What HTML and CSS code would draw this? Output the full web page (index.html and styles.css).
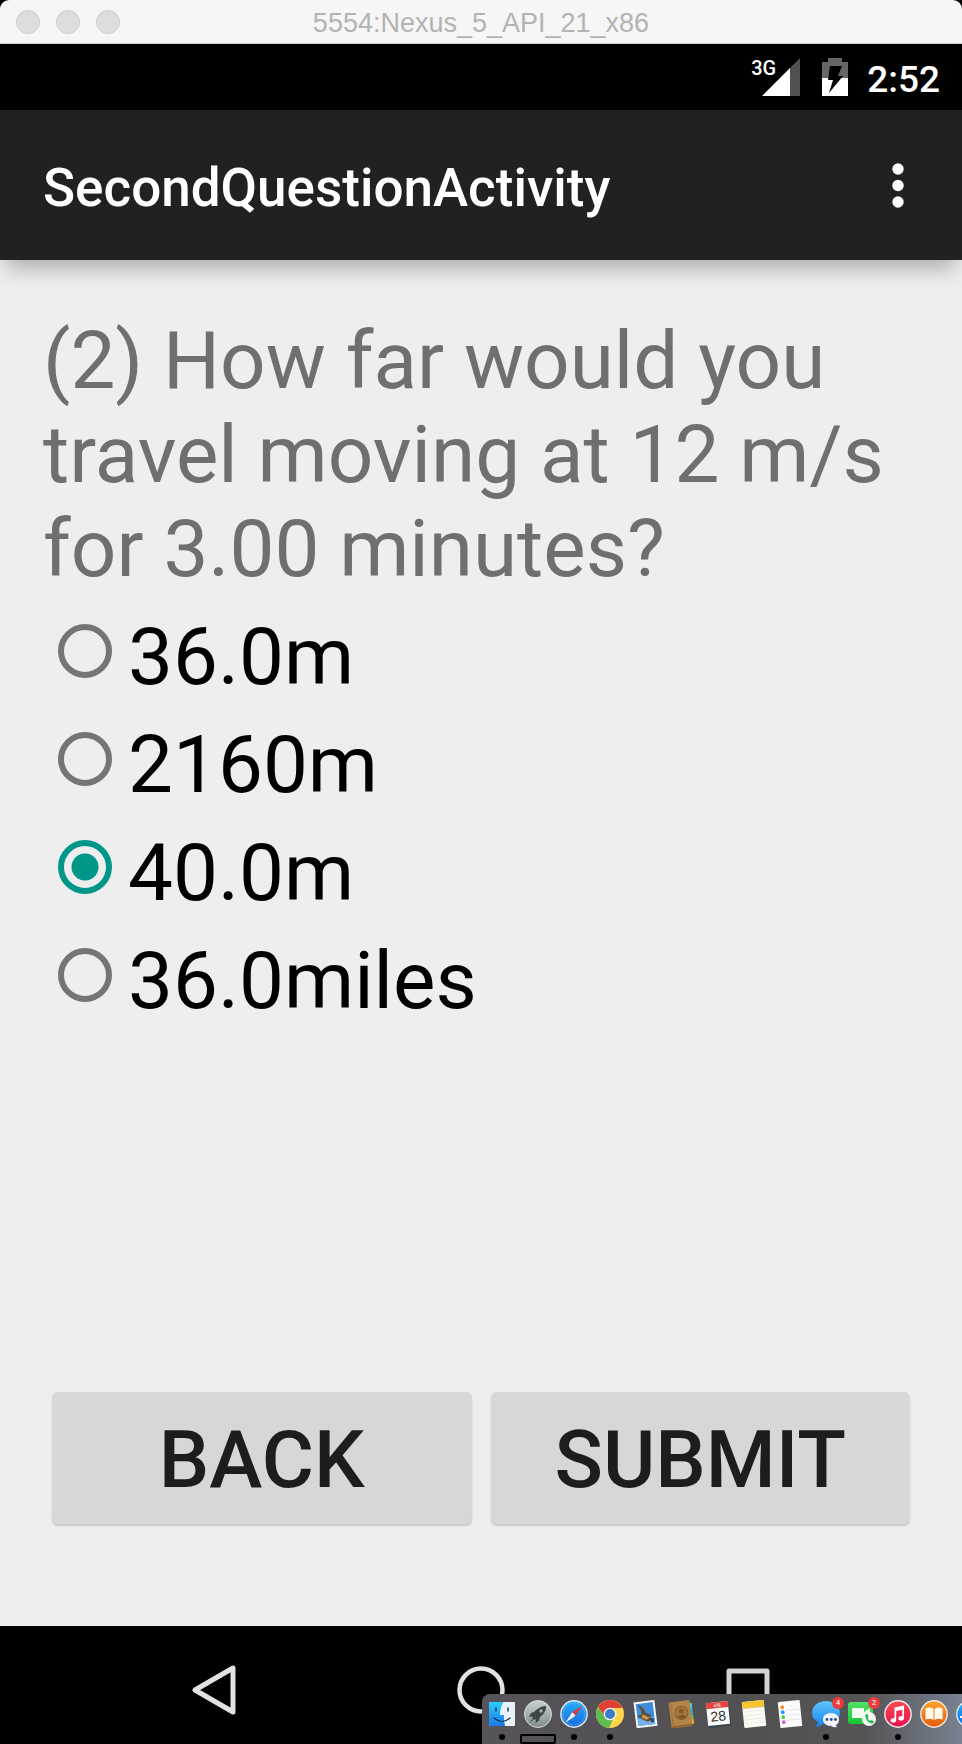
FILE: index.html
```html
<!DOCTYPE html>
<html lang="en">
<head>
<meta charset="utf-8">
<meta name="viewport" content="width=device-width, initial-scale=1">
<title>5554:Nexus_5_API_21_x86</title>
<link rel="stylesheet" href="styles.css">
</head>
<body>
<div class="window">
  <header class="titlebar">
    <div class="lights">
      <button class="light" type="button" aria-label="Close"></button>
      <button class="light" type="button" aria-label="Minimize"></button>
      <button class="light" type="button" aria-label="Zoom"></button>
    </div>
    <span class="window-title">5554:Nexus_5_API_21_x86</span>
  </header>

  <div class="statusbar">
    <span class="network">3G</span>
    <svg class="signal" width="38" height="38" viewBox="0 0 38 38" aria-hidden="true">
      <path fill="#505050" d="M38 0V38H27V11z"/>
      <path fill="#fff" d="M0 38L28 10V38z"/>
    </svg>
    <svg class="battery" width="26" height="38" viewBox="0 0 26 38" aria-hidden="true">
      <path fill="#666" d="M6 0H20V4H26V20H0V4H6z"/>
      <path fill="#fff" d="M0 20H26V38H0z"/>
      <path fill="#000" d="M8 8H20L16 18H21L7 35L11 22H6z"/>
    </svg>
    <time class="clock">2:52</time>
  </div>

  <div class="appbar">
    <h1 class="app-title">SecondQuestionActivity</h1>
    <button class="overflow" type="button" aria-label="More options">
      <svg width="12" height="46" viewBox="0 0 12 46" aria-hidden="true">
        <g fill="#fff"><circle cx="6" cy="6" r="5.7"/><circle cx="6" cy="22.500" r="5.700"/><circle cx="6" cy="39" r="5.700"/></g>
      </svg>
    </button>
  </div>

  <main class="content">
    <form class="quiz">
      <fieldset class="answers">
        <legend class="question">(2) How far would you travel moving at 12 m/s for 3.00 minutes?</legend>
        <label class="option"><input class="radio" type="radio" name="answer">36.0m</label>
        <label class="option"><input class="radio" type="radio" name="answer">2160m</label>
        <label class="option"><input class="radio" type="radio" name="answer" checked>40.0m</label>
        <label class="option"><input class="radio" type="radio" name="answer">36.0miles</label>
      </fieldset>
      <div class="actions">
        <button class="action" type="button">BACK</button>
        <button class="action" type="button">SUBMIT</button>
      </div>
    </form>
  </main>

  <nav class="navbar">
    <button class="nav-button" type="button" aria-label="Back">
      <svg width="52" height="52" viewBox="0 0 52 52" fill="none" stroke="#e2e2e2" stroke-width="5" stroke-linejoin="round" aria-hidden="true"><path d="M7 26L45 4V48z"/></svg>
    </button>
    <button class="nav-button" type="button" aria-label="Home">
      <svg width="52" height="52" viewBox="0 0 52 52" fill="none" stroke="#e2e2e2" stroke-width="4.500" aria-hidden="true"><circle cx="26" cy="26" r="21.500"/></svg>
    </button>
    <button class="nav-button" type="button" aria-label="Recent apps">
      <svg width="52" height="52" viewBox="0 0 52 52" fill="none" stroke="#d2d2d2" stroke-width="5" stroke-linejoin="round" aria-hidden="true"><path d="M7 7H45V45H7z"/></svg>
    </button>
  </nav>

  <div class="dock">
    <div class="app running">
      <svg class="app-icon" viewBox="0 0 28 28" aria-hidden="true">
        <defs>
          <linearGradient id="finder" x2="0" y2="1"><stop stop-color="#2bcdfb"/><stop offset="1" stop-color="#1b78ea"/></linearGradient>
          <linearGradient id="blue" x2="0" y2="1"><stop stop-color="#27aef5"/><stop offset="1" stop-color="#1769dc"/></linearGradient>
          <linearGradient id="steel" x2="0" y2="1"><stop stop-color="#c8d2d4"/><stop offset="1" stop-color="#828b8d"/></linearGradient>
          <linearGradient id="talk" x2="0" y2="1"><stop stop-color="#62c6fb"/><stop offset="1" stop-color="#1682f0"/></linearGradient>
          <linearGradient id="green" x2="0" y2="1"><stop stop-color="#53e169"/><stop offset="1" stop-color="#16c636"/></linearGradient>
          <linearGradient id="music" x2="0" y2="1"><stop stop-color="#fb4a50"/><stop offset="1" stop-color="#e80e50"/></linearGradient>
          <linearGradient id="books" x2="0" y2="1"><stop stop-color="#fca32b"/><stop offset="1" stop-color="#e35b0d"/></linearGradient>
        </defs>
        <rect x="1" y="2" width="26" height="24" rx="1" fill="#e9f1fb"/>
        <path d="M2 2H15.500C13 6 12 10 12 15H16Q15.500 20 17 26H2Q1 26 1 25V3Q1 2 2 2z" fill="url(#finder)"/>
        <path d="M8 8v3M20 8v3" stroke="#153253" stroke-width="1.400" stroke-linecap="round"/>
        <path d="M6 18Q14 25 22 18" fill="none" stroke="#173252" stroke-width="1.200" stroke-linecap="round"/>
      </svg>
    </div>
    <div class="app highlighted">
      <svg class="app-icon" viewBox="0 0 28 28" aria-hidden="true">
        <circle cx="14" cy="14" r="13.500" fill="url(#steel)" stroke="#d4d9da"/>
        <path d="M22 6C17 6 13 9 10 12L7 13L5 17L9 16.500L8 18L10 20L12 19L11.500 23L15 20.500L16 17C20 14 22 11 22 6z" fill="#3d4448"/>
        <circle cx="17" cy="11" r="1.700" fill="#a6b0b2"/><path d="M8 19L5 23L9 20" fill="#3d4448"/>
      </svg>
    </div>
    <div class="app running">
      <svg class="app-icon" viewBox="0 0 28 28" aria-hidden="true">
        <circle cx="14" cy="14" r="13.200" fill="url(#blue)" stroke="#dfe8ee" stroke-width="1.400"/>
        <circle cx="14" cy="14" r="11" fill="none" stroke="#8cc9fb" stroke-width="1.200" stroke-dasharray=".5 .9"/>
        <path d="M22.500 5.500L12.300 12.300L15.500 15.800z" fill="#e83531"/><path d="M5.500 22.500L12.300 12.300L15.500 15.800z" fill="#f4f5f7"/>
      </svg>
    </div>
    <div class="app running">
      <svg class="app-icon" viewBox="0 0 28 28" aria-hidden="true">
        <circle cx="14" cy="14" r="14" fill="#ffd54a"/>
        <path d="M1.900 7A14 14 0 0 1 26.100 7L25.500 8H14A6 6 0 0 0 8.200 15.500z" fill="#e13f35"/>
        <path d="M1.900 7L8.800 17A6 6 0 0 0 17 19L13 28A14 14 0 0 1 1.900 7z" fill="#5dbb54"/>
        <circle cx="14" cy="14" r="6.300" fill="#f0f3f7"/><circle cx="14" cy="14" r="5" fill="#3a7dc8"/>
      </svg>
    </div>
    <div class="app">
      <svg class="app-icon" viewBox="0 0 28 28" aria-hidden="true">
        <circle cx="22" cy="22" r="6" fill="#52545c"/>
        <g transform="rotate(-7 14 14)"><rect x="3" y="1" width="21" height="26" fill="#f5f6f8"/><rect x="5" y="3" width="17" height="22" fill="#3e8ddc"/>
        <path d="M5 18H22V25H5z" fill="#76b3e4"/><path d="M7 4Q13 7 14 13L20 16L17 17L20 20L15 22L10 19L5 15L10 14Q10 9 7 4z" fill="#624c35"/><path d="M11 14L17 18L14 20L9 17z" fill="#c19a58"/><path d="M18 19H21V23H18z" fill="#244468"/></g>
      </svg>
    </div>
    <div class="app">
      <svg class="app-icon" viewBox="0 0 28 28" aria-hidden="true">
        <g transform="rotate(-7 14 14)"><path d="M22 4H25V10H22z" fill="#54c8d8"/><path d="M22 10H25V16H22z" fill="#2caed4"/><path d="M22 16H25V20H22z" fill="#59c05d"/><path d="M22 20H25V25H22z" fill="#f2a62f"/>
        <rect x="2" y="1" width="21" height="26" rx="1" fill="#b28448"/><path d="M2 25H23V27H2z" fill="#8d642f"/><path d="M4 1V25" stroke="#9a7038"/><circle cx="13.500" cy="13" r="6.500" fill="#a3763a" stroke="#87602e"/><circle cx="13.500" cy="11" r="2.400" fill="#80592b"/><path d="M9 17Q13.500 12 18 17Q13.500 21 9 17z" fill="#80592b"/></g>
      </svg>
    </div>
    <div class="app">
      <svg class="app-icon calendar" viewBox="0 0 28 28" role="img" aria-label="Calendar">
        <g transform="rotate(-6 14 14)"><rect x="3" y="5" width="23" height="22" rx="1" fill="#344550"/><rect x="3" y="2" width="22" height="23" fill="#fafafa"/><rect x="3" y="2" width="22" height="6" fill="#e4433f"/>
        <text class="month" x="14" y="7" text-anchor="middle">4月</text><text class="day" x="14" y="21" text-anchor="middle">28</text></g>
      </svg>
    </div>
    <div class="app">
      <svg class="app-icon" viewBox="0 0 28 28" aria-hidden="true">
        <g transform="rotate(-6 14 14)"><rect x="3" y="1" width="22" height="26" rx="1" fill="#fbfaf4"/><path d="M3 1H25V7H3z" fill="#f8c52d"/><path d="M3 7.500H25" stroke="#c99d32" stroke-width=".6"/><path d="M4 11H24M4 15H24M4 19H24M4 23H24" stroke="#e3e1da" stroke-width=".5"/></g>
      </svg>
    </div>
    <div class="app">
      <svg class="app-icon" viewBox="0 0 28 28" aria-hidden="true">
        <g transform="rotate(-6 14 14)"><rect x="3" y="1" width="22" height="26" rx="1" fill="#fbfbfb"/><path d="M10 10H24M10 15H24M10 20H24" stroke="#d9d9dd" stroke-width=".6"/><circle cx="7" cy="6.500" r="1.900" fill="#f68a21"/><circle cx="7" cy="11.500" r="1.900" fill="#1f98ee"/><circle cx="7" cy="16.500" r="1.900" fill="#58c83b"/><circle cx="7" cy="21.500" r="1.900" fill="#c168dc"/></g>
      </svg>
    </div>
    <div class="app running">
      <svg class="app-icon" viewBox="0 0 28 28" aria-hidden="true">
        <path d="M14 1C6 1 0 6 0 13C0 17 2 20 6 22Q6 25 3 27Q8 27 11 24C21 25 28 20 28 13C28 6 22 1 14 1z" fill="url(#talk)"/>
        <path d="M19 13C14 13 11 16 11 19.500C11 23 14 26 19 26Q22 28 25 27Q23.500 26 24 25C26 24 27 22 27 19.500C27 16 24 13 19 13z" fill="#f2f6fa"/>
        <g fill="#234d91"><circle cx="15" cy="19.500" r="1.400"/><circle cx="19.300" cy="19.500" r="1.400"/><circle cx="23.500" cy="19.500" r="1.400"/></g>
      </svg>
      <span class="badge">4</span>
    </div>
    <div class="app">
      <svg class="app-icon" viewBox="0 0 28 28" aria-hidden="true">
        <rect y="2" width="25" height="22" rx="3" fill="url(#green)"/><rect x="4" y="8" width="12" height="10" rx="1" fill="#f4fbf3"/><path d="M16 12L22 8V18L16 15z" fill="#f4fbf3"/>
        <circle cx="21" cy="19" r="7" fill="#f3f7f3"/><path d="M17.500 14.500L19.500 14L20.500 17L19.500 18Q20.500 20 22.500 21L23.500 20L26 21.500L25 23.500C21 24 16.500 19 17.500 14.500z" fill="#25b956"/>
      </svg>
      <span class="badge">2</span>
    </div>
    <div class="app running">
      <svg class="app-icon" viewBox="0 0 28 28" aria-hidden="true">
        <circle cx="14" cy="14" r="13.200" fill="url(#music)" stroke="#f2e9ea" stroke-width="1.400"/>
        <path d="M10.500 7.500L20 5.500V18.500A2.800 2.300 0 1 1 18.300 16.200V9.700L12.200 11V20.500A2.800 2.300 0 1 1 10.500 18.200z" fill="#fff"/>
      </svg>
    </div>
    <div class="app">
      <svg class="app-icon" viewBox="0 0 28 28" aria-hidden="true">
        <circle cx="14" cy="14" r="13.200" fill="url(#books)" stroke="#f4e8da" stroke-width="1.400"/>
        <path d="M13.500 9Q10 6.500 5.500 8.500V19.500Q10 18 13.500 20zM14.500 9Q18 6.500 22.500 8.500V19.500Q18 18 14.500 20z" fill="#fff9ef"/>
      </svg>
    </div>
    <div class="app">
      <svg class="app-icon" viewBox="0 0 28 28" aria-hidden="true">
        <circle cx="14" cy="14" r="13.200" fill="url(#blue)" stroke="#dfe8ee" stroke-width="1.400"/><path d="M14 6L7 20M4 17H22M14 6L21 20" stroke="#fff" stroke-width="2"/>
      </svg>
    </div>
  </div>
</div>
</body>
</html>
```

FILE: styles.css
```css
* {
  box-sizing: border-box;
}

body {
  margin: 0;
  background: #000;
  font-family: Roboto, "Noto Sans", sans-serif;
}

button {
  margin: 0;
  padding: 0;
  border: 0;
  background: none;
  font: inherit;
  color: inherit;
}

svg {
  display: block;
}

.window {
  position: relative;
  display: flex;
  flex-direction: column;
  min-height: 100vh;
  overflow: hidden;
}

/* Desktop window frame */
.titlebar {
  display: grid;
  grid-template-columns: 1fr auto 1fr;
  align-items: center;
  height: 44px;
  padding: 0 16px;
  border-bottom: 1px solid #d2d2d2;
  border-radius: 9px 9px 0 0;
  background: #f6f6f6;
}

.lights {
  display: flex;
  gap: 16px;
}

.light {
  width: 24px;
  height: 24px;
  border: 1px solid #cdcdcd;
  border-radius: 50%;
  background: #dddddd;
}

.window-title {
  padding-top: 2px;
  font-family: "Liberation Sans", Arial, sans-serif;
  font-size: 27px;
  line-height: 30px;
  color: #b3b3b3;
}

/* Android status bar */
.statusbar {
  display: flex;
  justify-content: flex-end;
  align-items: center;
  height: 66px;
  padding-right: 22px;
  background: #000;
  color: #fff;
}

.network {
  align-self: flex-start;
  margin: 12px -14px 0 0;
  font-size: 20px;
  font-weight: 500;
  line-height: 24px;
}

.battery {
  margin: 0 19px 0 22px;
}

.clock {
  padding-top: 5px;
  font-size: 37px;
  font-weight: 500;
  line-height: 44px;
}

/* App bar */
.appbar {
  position: relative;
  z-index: 1;
  display: flex;
  justify-content: space-between;
  align-items: center;
  height: 150px;
  padding: 2px 43px 0;
  background: #212121;
  box-shadow: 0 14px 20px -6px rgba(0, 0, 0, 0.28);
  color: #fff;
}

.app-title {
  margin: 0;
  padding-top: 4px;
  font-size: 53px;
  font-weight: 500;
  line-height: 62px;
}

.overflow {
  padding: 0 15px;
}

/* Question */
.content {
  display: flex;
  flex: 1;
  flex-direction: column;
  padding: 54px 43px 102px;
  background: #eee;
}

.quiz {
  display: flex;
  flex: 1;
  flex-direction: column;
  justify-content: space-between;
}

.answers {
  margin: 0;
  padding: 0;
  border: 0;
}

.question {
  margin-bottom: 7px;
  padding: 0;
  font-size: 80px;
  line-height: 94px;
  color: #6f6f6f;
}

.option {
  display: flex;
  align-items: center;
  gap: 16px;
  padding-left: 15px;
  font-size: 80px;
  line-height: 108px;
  color: #000;
}

.radio {
  appearance: none;
  width: 54px;
  height: 54px;
  margin: 0 0 12px;
  border: 6px solid #757575;
  border-radius: 50%;
}

.radio:checked {
  border-color: #009688;
  background: radial-gradient(circle, #009688 13px, transparent 14px);
}

.actions {
  display: flex;
  gap: 19px;
  padding: 0 9px;
}

.action {
  flex: 1;
  padding: 21px 0 17px;
  border-radius: 6px;
  background: #d6d7d7;
  box-shadow: 0 2px 2px rgba(0, 0, 0, 0.16);
  font-size: 80px;
  font-weight: 500;
  line-height: 94px;
  color: #1d1d1d;
}

/* Android navigation bar */
.navbar {
  display: flex;
  justify-content: center;
  align-items: center;
  height: 118px;
  padding: 10px 80px 0;
  background: #000;
}

.nav-button {
  display: flex;
  flex: 1;
  justify-content: center;
}

/* Desktop dock, lying over the lower right corner */
.dock {
  position: absolute;
  right: 0;
  bottom: 0;
  left: 50%;
  display: flex;
  height: 50px;
  margin-left: 1px;
  padding: 6px 0 0 2px;
  overflow: hidden;
  border-top-left-radius: 8px;
  background: linear-gradient(90deg, #57535a, #515051 55%, #555457 80%, #788290);
}

.app {
  position: relative;
  display: flex;
  flex: none;
  flex-direction: column;
  align-items: center;
  width: 36px;
}

.app-icon {
  width: 28px;
  height: 28px;
}

.running::after {
  width: 6px;
  height: 6px;
  margin-top: 6px;
  border-radius: 50%;
  background: #000;
  content: "";
}

.highlighted::after {
  width: 32px;
  height: 6px;
  margin-top: 6px;
  border: 2px solid #000;
  border-radius: 2px;
  content: "";
}

.badge {
  position: absolute;
  top: -3px;
  right: 0;
  width: 12px;
  height: 12px;
  border-radius: 50%;
  background: #ea3c3c;
  font-size: 8px;
  line-height: 12px;
  text-align: center;
  color: #fff;
}

.month {
  font-family: "Liberation Sans", "Noto Sans CJK SC", sans-serif;
  font-size: 5px;
  fill: #fff;
}

.day {
  font-family: "Liberation Sans", Arial, sans-serif;
  font-size: 14px;
  fill: #333;
}
```
